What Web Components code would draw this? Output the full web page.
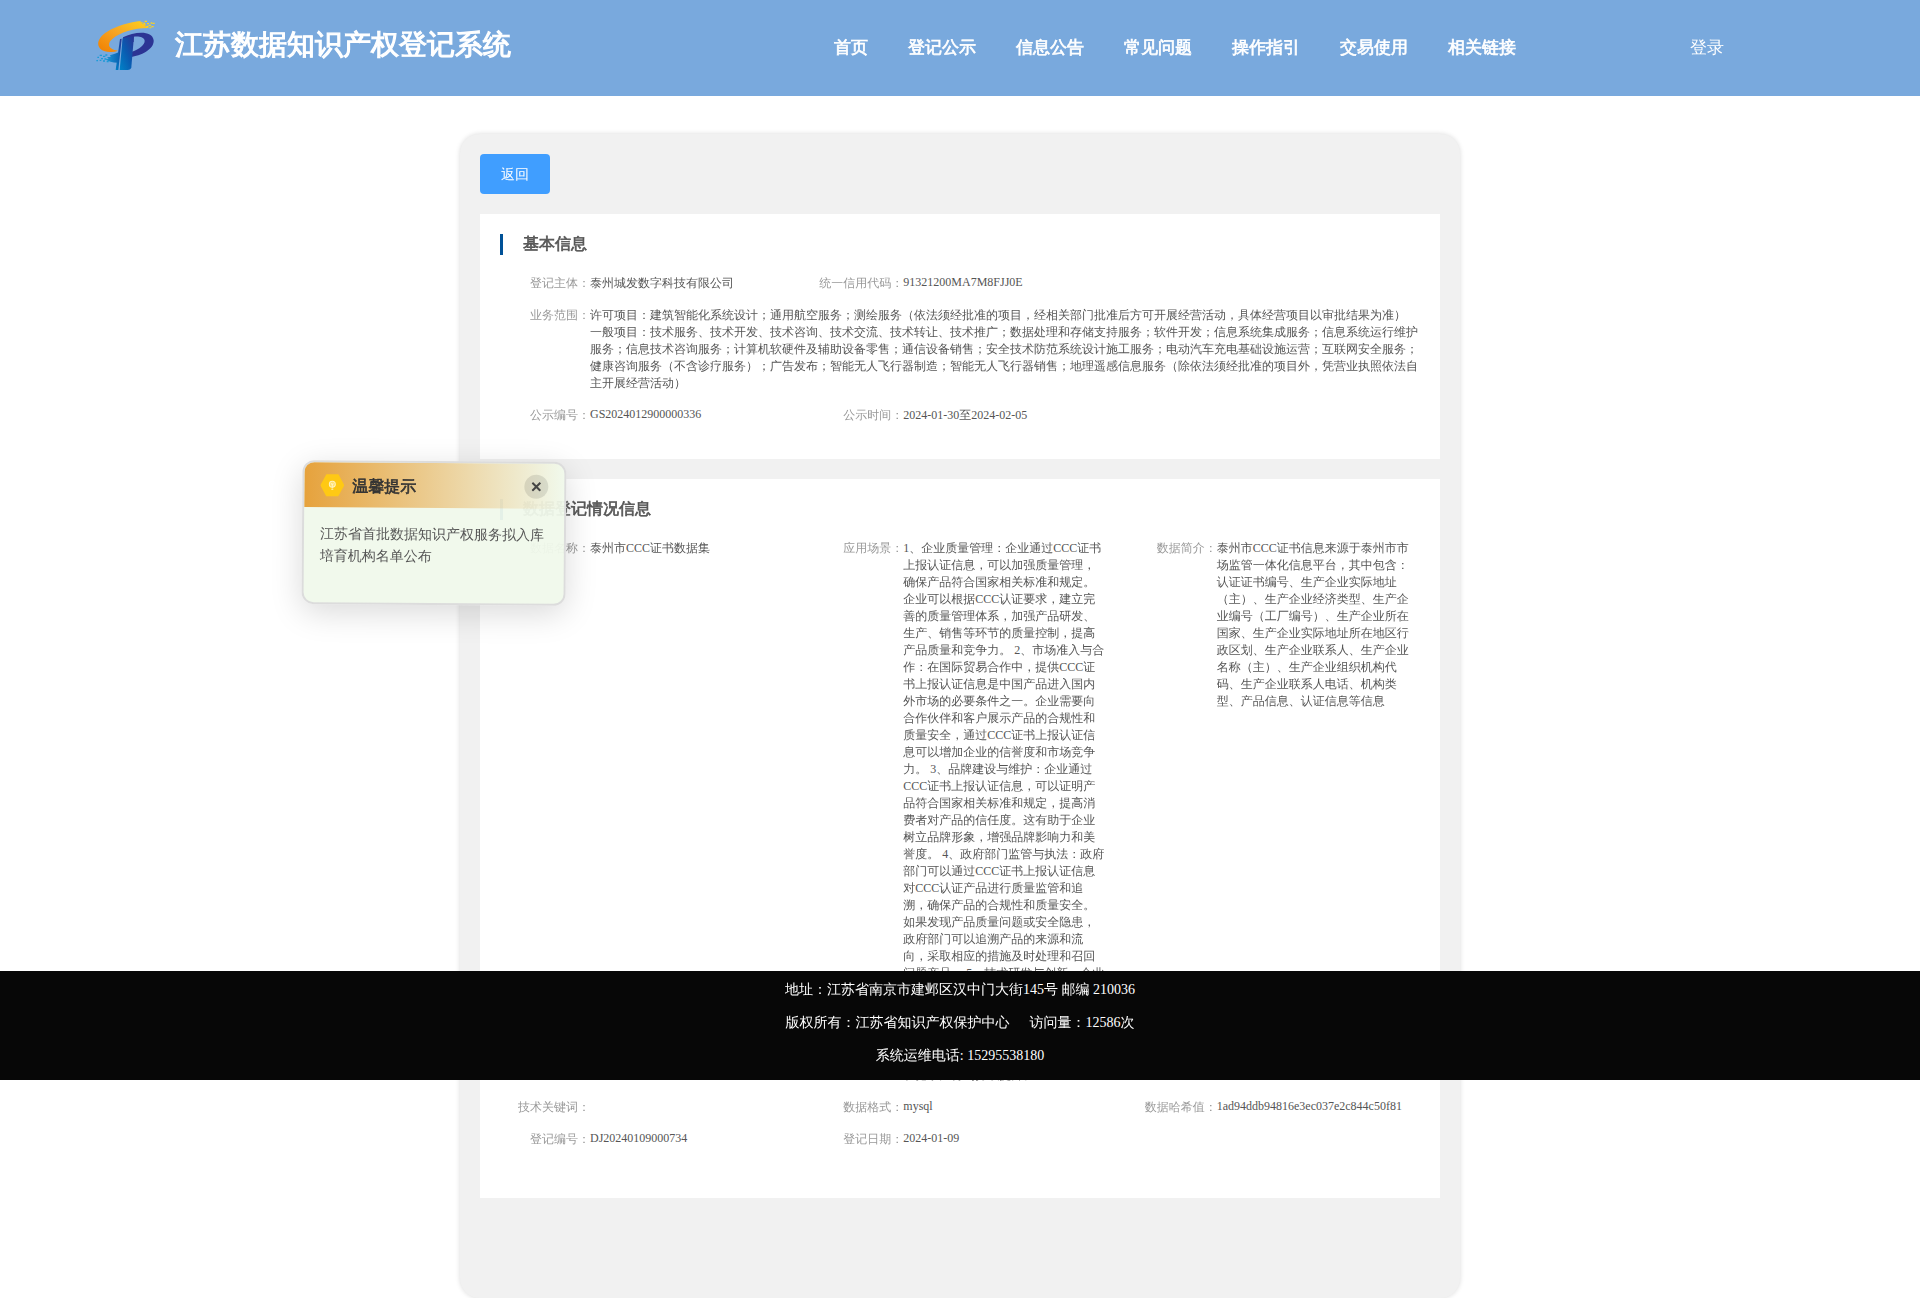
<!DOCTYPE html>
<html lang="zh-CN">
<head>
<meta charset="utf-8">
<title>江苏数据知识产权登记系统</title>
<style>
body {
    margin: 0;
    background: #fff;
    font-family: "Liberation Serif", "WenQuanYi Zen Hei", "Noto Sans CJK SC", serif;
    text-spacing-trim: space-all;
    /* the CJK face has no bold cut, headings get a thin outline instead */
    --heavy: .04em;
}
</style>
</head>
<body>
<ip-page></ip-page>

<script>
customElements.define('ip-logo', class extends HTMLElement {
    constructor() {
        super();

        this.attachShadow({ mode: 'open' }).innerHTML = `
        <style>
        :host { display: block; width: 60px; height: 52px; }
        svg { display: block; width: 100%; height: 100%; }
        </style>

        <svg viewBox="18 27 180 156" aria-hidden="true">
            <defs>
                <linearGradient id="gold" x1="0" y1="1" x2="1" y2="0">
                    <stop offset="0" stop-color="#f07f00"/>
                    <stop offset=".5" stop-color="#f7a524"/>
                    <stop offset="1" stop-color="#ffd21c"/>
                </linearGradient>
                <linearGradient id="stem" x1="0" y1="1" x2="1" y2="0">
                    <stop offset="0" stop-color="#0083c8"/>
                    <stop offset=".5" stop-color="#0a5ab0"/>
                    <stop offset="1" stop-color="#2c3494"/>
                </linearGradient>
                <linearGradient id="tail" x1="0" y1="0" x2="1" y2="0">
                    <stop offset="0" stop-color="#1b9bd8"/>
                    <stop offset="1" stop-color="#0b62b2"/>
                </linearGradient>
            </defs>
            <path fill="url(#gold)" d="M153 33C108 37 52 57 32 82C16 103 26 124 60 126Q74 127 84 122C58 120 48 103 67 87C90 67 133 54 173 54L178 50L165 49L168 43L156 42L160 37L151 37Z"/>
            <g fill="#ffd21c">
                <path d="M164 32h7v4h-7zM160 38h6v4h-6zM171 39h6v4h-6zM182 37h5v4h-5zM188 38h6v4h-6zM176 44h7v4h-7zM184 48h7v4h-7zM169 47h6v4h-6zM178 52h6v3h-6z"/>
            </g>
            <path fill="#2c3494" fill-rule="evenodd" d="M99 82C132 65 187 59 191 91C193 119 151 138 122 141L126 125C148 117 165 104 164 92C163 82 148 78 131 80L131 96L98 100Z"/>
            <path fill="url(#stem)" d="M98 85L132 78L124 172Q122 180 113 180H89Z"/>
            <path fill="url(#stem)" d="M90 87L95 86L85 180H77Z"/>
            <path fill="url(#tail)" d="M88 126L84 158C66 158 55 155 46 148L56 146L51 141L62 141L60 136C70 133 79 130 88 126Z"/>
            <g fill="#1b9bd8">
                <path d="M29 134h7v4h-7zM39 137h7v4h-7zM46 133h6v4h-6zM22 140h5v4h-5zM33 144h6v4h-6zM43 145h6v4h-6zM19 150h5v4h-5zM29 149h5v4h-5zM39 151h6v4h-6zM50 153h6v4h-6z"/>
            </g>
        </svg>
        `;
    }
});

customElements.define('ip-header', class extends HTMLElement {
    constructor() {
        super();

        this.attachShadow({ mode: 'open' }).innerHTML = `
        <style>
        :host { display: block; background: #79a9dd; color: #fff; }
        header {
            display: grid;
            grid-template-columns: auto 65fr auto 35fr auto;
            align-items: center;
            height: 96px;
            padding: 0 196px 0 5%;
        }
        .brand { display: flex; align-items: center; gap: 19px; padding-bottom: 6px; }
        h1 { margin: 0; font-size: 28px; line-height: 40px; white-space: nowrap; -webkit-text-stroke: var(--heavy); }
        nav { grid-column: 3; display: flex; gap: 40px; }
        a { color: inherit; font-size: 17px; line-height: 24px; text-decoration: none; white-space: nowrap; }
        nav a { font-weight: bold; -webkit-text-stroke: var(--heavy); }
        .login { grid-column: 5; }
        </style>

        <header>
            <div class="brand">
                <ip-logo></ip-logo>
                <h1>江苏数据知识产权登记系统</h1>
            </div>
            <nav>
                <a href="#">首页</a>
                <a href="#">登记公示</a>
                <a href="#">信息公告</a>
                <a href="#">常见问题</a>
                <a href="#">操作指引</a>
                <a href="#">交易使用</a>
                <a href="#">相关链接</a>
            </nav>
            <a class="login" href="#">登录</a>
        </header>
        `;
    }
});

// titled white card, three columns of info-item inside
customElements.define('info-card', class extends HTMLElement {
    constructor() {
        super();

        this.attachShadow({ mode: 'open' }).innerHTML = `
        <style>
        :host { display: block; padding: 20px 0 20px 20px; background: #fff; }
        h2 {
            margin: 0 0 20px;
            padding: 0 0 2px 20px;
            border-left: 3px solid #005197;
            color: #555;
            font-size: 16px;
            line-height: 19px;
            -webkit-text-stroke: var(--heavy);
        }
        .grid { display: grid; grid-template-columns: repeat(3, 1fr); }
        </style>

        <h2></h2>
        <div class="grid"><slot></slot></div>
        `;
    }

    connectedCallback() {
        this.shadowRoot.querySelector('h2').textContent = this.getAttribute('heading');
    }
});

customElements.define('info-item', class extends HTMLElement {
    constructor() {
        super();

        this.attachShadow({ mode: 'open' }).innerHTML = `
        <style>
        :host {
            display: flex;
            align-items: flex-start;
            min-width: 0;
            padding: 0 20px 15px 0;
            font-size: 12px;
        }
        :host([wide]) { grid-column: 1 / -1; }
        :host([end]) { grid-column-end: -2; }
        .label { flex: none; width: 90px; color: #999; text-align: right; white-space: nowrap; }
        .value { flex: 1; min-width: 0; color: #555; }
        </style>

        <span class="label"></span>
        <span class="value"><slot></slot></span>
        `;
    }

    connectedCallback() {
        this.shadowRoot.querySelector('.label').textContent = this.getAttribute('label');
    }
});

customElements.define('tip-popup', class extends HTMLElement {
    constructor() {
        super();

        this.attachShadow({ mode: 'open' }).innerHTML = `
        <style>
        :host {
            position: absolute;
            top: 461px;
            left: 302px;
            box-sizing: border-box;
            width: 264px;
            border: 2px solid #dcdcdc;
            border-radius: 12px;
            background: rgba(240, 249, 235, .95);
            box-shadow: 0 8px 32px rgba(0, 0, 0, .15);
            transform: rotate(.4deg);
            overflow: hidden;
        }
        .head {
            display: flex;
            align-items: center;
            gap: 8px;
            height: 45px;
            padding: 0 16px;
            background: linear-gradient(90deg, #e6a23c, rgba(230, 162, 60, 0));
        }
        svg { display: block; }
        h3 { flex: 1; margin: 0; padding-top: 2px; color: #333; font-size: 16px; line-height: 24px; -webkit-text-stroke: var(--heavy); }
        button {
            display: flex;
            align-items: center;
            justify-content: center;
            width: 24px;
            height: 24px;
            padding: 0;
            border: 0;
            border-radius: 50%;
            background: rgba(0, 0, 0, .1);
        }
        p { margin: 0; padding: 16px 16px 35px; color: #555; font-size: 14px; line-height: 22px; }
        </style>

        <div class="head">
            <svg width="24" height="24" viewBox="0 0 24 24" aria-hidden="true">
                <path fill="#ffc914" d="M6 1h12l6 11-6 11H6L0 12z"/>
                <circle cx="12" cy="11" r="3" fill="#ffdf6b" stroke="#fff3c0"/>
                <path d="M11 10l1 2 1-2M12 12v3M11 16h2" fill="none" stroke="#fff3c0"/>
            </svg>
            <h3>温馨提示</h3>
            <button type="button" aria-label="关闭">
                <svg width="10" height="10" viewBox="0 0 10 10"><path d="M1 1l8 8M9 1l-8 8" stroke="#444" stroke-width="2"/></svg>
            </button>
        </div>
        <p><slot></slot></p>
        `;
    }
});

customElements.define('ip-footer', class extends HTMLElement {
    constructor() {
        super();

        this.attachShadow({ mode: 'open' }).innerHTML = `
        <style>
        :host {
            position: absolute;
            top: 971px;
            left: 0;
            right: 0;
            padding: 2px 0 8px;
            background: #070707;
            color: #fff;
            font-size: 14px;
            line-height: 33px;
            text-align: center;
        }
        p { display: flex; justify-content: center; gap: 20px; margin: 0; }
        </style>

        <p>地址：江苏省南京市建邺区汉中门大街145号 邮编 210036</p>
        <p><span>版权所有：江苏省知识产权保护中心</span><span>访问量：12586次</span></p>
        <p>系统运维电话: 15295538180</p>
        `;
    }
});

customElements.define('ip-page', class extends HTMLElement {
    constructor() {
        super();

        this.attachShadow({ mode: 'open' }).innerHTML = `
        <style>
        :host { display: block; position: relative; }
        main {
            display: flex;
            flex-direction: column;
            gap: 20px;
            box-sizing: border-box;
            max-width: 1000px;
            margin: 38px auto 0;
            padding: 20px 20px 100px;
            border-radius: 20px;
            background: #f1f1f1;
            box-shadow: 0 0 5px rgba(0, 0, 0, .15);
        }
        .back {
            align-self: flex-start;
            width: 70px;
            height: 40px;
            padding: 2px 0 0;
            border: 0;
            border-radius: 4px;
            background: #409eff;
            color: #fff;
            font: inherit;
            font-size: 14px;
        }
        </style>

        <ip-header></ip-header>
        <main>
            <button class="back" type="button">返回</button>

            <info-card heading="基本信息">
                <info-item label="登记主体：">泰州城发数字科技有限公司</info-item>
                <info-item label="统一信用代码：" end>91321200MA7M8FJJ0E</info-item>
                <info-item label="业务范围：" wide>许可项目：建筑智能化系统设计；通用航空服务；测绘服务（依法须经批准的项目，经相关部门批准后方可开展经营活动，具体经营项目以审批结果为准） 一般项目：技术服务、技术开发、技术咨询、技术交流、技术转让、技术推广；数据处理和存储支持服务；软件开发；信息系统集成服务；信息系统运行维护服务；信息技术咨询服务；计算机软硬件及辅助设备零售；通信设备销售；安全技术防范系统设计施工服务；电动汽车充电基础设施运营；互联网安全服务；健康咨询服务（不含诊疗服务）；广告发布；智能无人飞行器制造；智能无人飞行器销售；地理遥感信息服务（除依法须经批准的项目外，凭营业执照依法自主开展经营活动）</info-item>
                <info-item label="公示编号：">GS2024012900000336</info-item>
                <info-item label="公示时间：">2024-01-30至2024-02-05</info-item>
            </info-card>

            <info-card heading="数据登记情况信息">
                <info-item label="数据名称：">泰州市CCC证书数据集</info-item>
                <info-item label="应用场景：">1、企业质量管理：企业通过CCC证书上报认证信息，可以加强质量管理，确保产品符合国家相关标准和规定。企业可以根据CCC认证要求，建立完善的质量管理体系，加强产品研发、生产、销售等环节的质量控制，提高产品质量和竞争力。 2、市场准入与合作：在国际贸易合作中，提供CCC证书上报认证信息是中国产品进入国内外市场的必要条件之一。企业需要向合作伙伴和客户展示产品的合规性和质量安全，通过CCC证书上报认证信息可以增加企业的信誉度和市场竞争力。 3、品牌建设与维护：企业通过CCC证书上报认证信息，可以证明产品符合国家相关标准和规定，提高消费者对产品的信任度。这有助于企业树立品牌形象，增强品牌影响力和美誉度。 4、政府部门监管与执法：政府部门可以通过CCC证书上报认证信息对CCC认证产品进行质量监管和追溯，确保产品的合规性和质量安全。如果发现产品质量问题或安全隐患，政府部门可以追溯产品的来源和流向，采取相应的措施及时处理和召回问题产品。 5、技术研发与创新：企业可以根据证书上报认证信息了解产品的技术水平和发展趋势为技术研发提供参考依据推动企业不断改进产品设计和生产工艺提升产品的技术含量和附加值从而促进行业整体的创新能力和竞争力得到持续提升。</info-item>
                <info-item label="数据简介：">泰州市CCC证书信息来源于泰州市市场监管一体化信息平台，其中包含：认证证书编号、生产企业实际地址（主）、生产企业经济类型、生产企业编号（工厂编号）、生产企业所在国家、生产企业实际地址所在地区行政区划、生产企业联系人、生产企业名称（主）、生产企业组织机构代码、生产企业联系人电话、机构类型、产品信息、认证信息等信息</info-item>
                <info-item label="技术关键词："></info-item>
                <info-item label="数据格式：">mysql</info-item>
                <info-item label="数据哈希值：">1ad94ddb94816e3ec037e2c844c50f81</info-item>
                <info-item label="登记编号：">DJ20240109000734</info-item>
                <info-item label="登记日期：">2024-01-09</info-item>
                <info-item wide></info-item>
            </info-card>
        </main>
        <ip-footer></ip-footer>
        <tip-popup>江苏省首批数据知识产权服务拟入库培育机构名单公布</tip-popup>
        `;
    }
});
</script>
</body>
</html>
